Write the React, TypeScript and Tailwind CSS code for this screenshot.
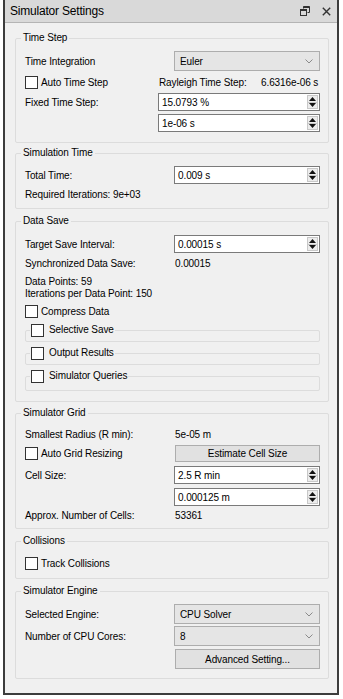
import React from "react";

const font = "font-['Liberation_Sans',Arial,sans-serif]";

function Checkbox() {
  return <span className="block w-[13px] h-[13px] border border-[#333333] bg-white shrink-0" />;
}

function SpinArrows() {
  return (
    <div className="w-[11px] my-[1px] mr-[1px] flex flex-col bg-[#ececec] border border-[#c8c8c8]">
      <div className="flex-1 flex items-center justify-center border-b border-[#c8c8c8]">
        <svg width="7" height="4" viewBox="0 0 7 4">
          <path d="M0 4 L3.5 0 L7 4 Z" fill="#111" />
        </svg>
      </div>
      <div className="flex-1 flex items-center justify-center">
        <svg width="7" height="4" viewBox="0 0 7 4">
          <path d="M0 0 L3.5 4 L7 0 Z" fill="#111" />
        </svg>
      </div>
    </div>
  );
}

function Spin({ value, w }: { value: string; w: string }) {
  return (
    <div className={`flex h-[18px] border border-[#7a7a7a] bg-white ${w}`}>
      <div className="flex-1 pl-[3px] flex items-center">{value}</div>
      <SpinArrows />
    </div>
  );
}

function Combo({ value }: { value: string }) {
  return (
    <div className="flex items-center h-[20px] w-[146px] border border-[#adadad] bg-[#e5e5e5] pl-[5px] pr-[6px]">
      <span className="flex-1">{value}</span>
      <svg width="8" height="5" viewBox="0 0 8 5">
        <path d="M0.5 0.5 L4 4 L7.5 0.5" stroke="#8a8a8a" strokeWidth="1" fill="none" />
      </svg>
    </div>
  );
}

function Button({ label, h }: { label: string; h: string }) {
  return (
    <div className={`flex items-center justify-center w-[145px] ${h} border border-[#adadad] bg-[#e1e1e1]`}>
      {label}
    </div>
  );
}

function Group({
  title,
  className,
  children,
}: {
  title: string;
  className: string;
  children: React.ReactNode;
}) {
  return (
    <fieldset className={`border border-[#dcdcdc] rounded-[2px] px-0 ${className}`}>
      <legend className="ml-[5px] px-[2px] leading-[14px]">{title}</legend>
      <div className="pl-[9px] pr-[8px]">{children}</div>
    </fieldset>
  );
}

function SubGroup({ title, className }: { title: string; className: string }) {
  return (
    <fieldset className={`border border-[#dcdcdc] rounded-[2px] px-0 w-[295px] ${className}`}>
      <legend className="ml-[4px] px-[1px] leading-[14px]">
        <span className="flex items-center gap-[5px] h-[14px]">
          <Checkbox />
          <span>{title}</span>
        </span>
      </legend>
    </fieldset>
  );
}

function Row({
  label,
  children,
  className,
  lw = "w-[149px]",
}: {
  label: string;
  children: React.ReactNode;
  className: string;
  lw?: string;
}) {
  return (
    <div className={`flex items-center ${className}`}>
      <span className={`${lw} shrink-0`}>{label}</span>
      {children}
    </div>
  );
}

export default function App() {
  return (
    <div
      className={`w-[343px] h-[699px] bg-white pl-[3px] pr-[4px] pb-[4px] text-[10px] tracking-[-0.1px] text-black ${font}`}
    >
      <div className="h-full flex flex-col border-x-2 border-b-2 border-[#3c3c3c] bg-[#f0f0f0]">
        {/* Title bar */}
        <div className="h-[23px] shrink-0 flex items-center bg-[#d9d9d9] border-b border-[#b4b4b4] pl-[5px] pr-[6px]">
          <span className="flex-1 text-[12px] tracking-[-0.2px]">Simulator Settings</span>
          <svg width="10" height="10" viewBox="0 0 10 10" className="mr-[12px]">
            <path d="M3.5 0.5 H9.5 V6.5 H7.5" stroke="#333" strokeWidth="1" fill="none" />
            <path d="M3.5 0.5 V2.5" stroke="#333" strokeWidth="1" />
            <rect x="0.5" y="3.5" width="6" height="6" stroke="#333" strokeWidth="1" fill="none" />
            <rect x="0.5" y="3.5" width="6" height="1.5" fill="#333" />
            <rect x="3.5" y="0.5" width="6" height="1.5" fill="#333" />
          </svg>
          <svg width="9" height="9" viewBox="0 0 9 9">
            <path d="M0.8 0.8 L8.2 8.2 M8.2 0.8 L0.8 8.2" stroke="#333" strokeWidth="1.4" />
          </svg>
        </div>

        {/* Content */}
        <div className="flex flex-col pl-[10px] pr-[8px]">
          <Group title="Time Step" className="mt-[8px] pb-[10px]">
            <Row label="Time Integration" className="mt-[6px] h-[20px]">
              <Combo value="Euler" />
            </Row>
            <div className="flex items-center h-[20px] mt-[1px]">
              <div className="w-[134px] flex items-center gap-[3px]">
                <Checkbox />
                <span>Auto Time Step</span>
              </div>
              <span className="w-[102px]">Rayleigh Time Step:</span>
              <span>6.6316e-06 s</span>
            </div>
            <Row label="Fixed Time Step:" lw="w-[133px]" className="mt-[1px] h-[18px]">
              <Spin value="15.0793 %" w="w-[162px]" />
            </Row>
            <div className="flex justify-end mt-[3px]">
              <Spin value="1e-06 s" w="w-[162px]" />
            </div>
          </Group>

          <Group title="Simulation Time" className="mt-[3px] pb-[6px]">
            <Row label="Total Time:" className="mt-[6px] h-[18px]">
              <Spin value="0.009 s" w="w-[146px]" />
            </Row>
            <div className="mt-[2px] h-[16px] flex items-center">Required Iterations: 9e+03</div>
          </Group>

          <Group title="Data Save" className="mt-[5px] pb-[10px]">
            <Row label="Target Save Interval:" className="mt-[7px] h-[18px]">
              <Spin value="0.00015 s" w="w-[146px]" />
            </Row>
            <Row label="Synchronized Data Save:" className="mt-[3px] h-[14px]">
              <span className="pl-[1px]">0.00015</span>
            </Row>
            <div className="mt-[5px] h-[12px] flex items-center">Data Points: 59</div>
            <div className="h-[12px] flex items-center">Iterations per Data Point: 150</div>
            <div className="mt-[5px] h-[14px] flex items-center gap-[3px]">
              <Checkbox />
              <span>Compress Data</span>
            </div>
            <SubGroup title="Selective Save" className="mt-[5px] pb-[4px]" />
            <SubGroup title="Output Results" className="mt-[4px] pb-[4px]" />
            <SubGroup title="Simulator Queries" className="mt-[4px] pb-[7px]" />
          </Group>

          <Group title="Simulator Grid" className="mt-[4px] pb-[6px]">
            <Row label="Smallest Radius (R min):" className="mt-[7px] h-[14px]">
              <span className="pl-[1px]">5e-05 m</span>
            </Row>
            <div className="flex items-center mt-[3px] h-[18px]">
              <div className="w-[150px] flex items-center gap-[3px]">
                <Checkbox />
                <span>Auto Grid Resizing</span>
              </div>
              <Button label="Estimate Cell Size" h="h-[17px]" />
            </div>
            <Row label="Cell Size:" className="mt-[4px] h-[18px]">
              <Spin value="2.5 R min" w="w-[146px]" />
            </Row>
            <div className="flex justify-end mt-[4px]">
              <Spin value="0.000125 m" w="w-[146px]" />
            </div>
            <Row label="Approx. Number of Cells:" className="mt-[2px] h-[14px]">
              <span className="pl-[1px]">53361</span>
            </Row>
          </Group>

          <Group title="Collisions" className="mt-[5px] pb-[8px]">
            <div className="mt-[8px] h-[14px] flex items-center gap-[3px]">
              <Checkbox />
              <span>Track Collisions</span>
            </div>
          </Group>

          <Group title="Simulator Engine" className="mt-[5px] pb-[9px]">
            <Row label="Selected Engine:" className="mt-[6px] h-[20px]">
              <Combo value="CPU Solver" />
            </Row>
            <Row label="Number of CPU Cores:" className="mt-[2px] h-[20px]">
              <Combo value="8" />
            </Row>
            <div className="flex justify-end mt-[3px]">
              <Button label="Advanced Setting..." h="h-[20px]" />
            </div>
          </Group>
        </div>
      </div>
    </div>
  );
}
